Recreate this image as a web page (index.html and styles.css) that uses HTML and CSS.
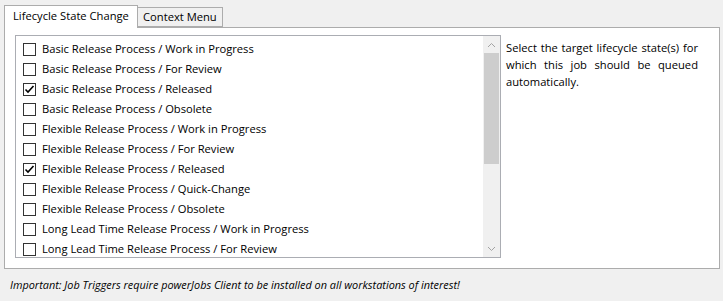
FILE: index.html
```html
<!DOCTYPE html>
<html>
<head>
<meta charset="utf-8">
<link rel="stylesheet" href="styles.css">
</head>
<body>
<div class="tabs">
  <div class="tab active">Lifecycle State Change</div>
  <div class="tab">Context Menu</div>
</div>
<div class="panel">
  <div class="listbox">
    <div class="items">
      <div class="row"><span class="cb"></span>Basic Release Process / Work in Progress</div>
      <div class="row"><span class="cb"></span>Basic Release Process / For Review</div>
      <div class="row"><span class="cb"><svg viewBox="0 0 13 13" width="13" height="13"><path d="M2.5 6.5 L5 9 L10.5 3" fill="none" stroke="#000" stroke-width="1.6"/></svg></span>Basic Release Process / Released</div>
      <div class="row"><span class="cb"></span>Basic Release Process / Obsolete</div>
      <div class="row"><span class="cb"></span>Flexible Release Process / Work in Progress</div>
      <div class="row"><span class="cb"></span>Flexible Release Process / For Review</div>
      <div class="row"><span class="cb"><svg viewBox="0 0 13 13" width="13" height="13"><path d="M2.5 6.5 L5 9 L10.5 3" fill="none" stroke="#000" stroke-width="1.6"/></svg></span>Flexible Release Process / Released</div>
      <div class="row"><span class="cb"></span>Flexible Release Process / Quick-Change</div>
      <div class="row"><span class="cb"></span>Flexible Release Process / Obsolete</div>
      <div class="row"><span class="cb"></span>Long Lead Time Release Process / Work in Progress</div>
      <div class="row"><span class="cb"></span>Long Lead Time Release Process / For Review</div>
    </div>
    <div class="scrollbar">
      <div class="arrow"><svg width="9" height="6" viewBox="0 0 9 6"><path d="M1 5 L4.5 1.5 L8 5" fill="none" stroke="#a3a3a3" stroke-width="1"/></svg></div>
      <div class="thumb"></div>
      <div class="track"></div>
      <div class="arrow"><svg width="9" height="6" viewBox="0 0 9 6"><path d="M1 1 L4.5 4.5 L8 1" fill="none" stroke="#a3a3a3" stroke-width="1"/></svg></div>
    </div>
  </div>
  <p class="desc">Select the target lifecycle state(s) for which this job should be queued automatically.</p>
</div>
<p class="note">Important: Job Triggers require powerJobs Client to be installed on all workstations of interest!</p>
</body>
</html>
```
FILE: styles.css
```css
html, body {
  margin: 0;
  padding: 0;
  background: #f0f0f0;
  width: 723px;
  height: 301px;
  overflow: hidden;
  font-family: "Open Sans", "Noto Sans", sans-serif;
  font-size: 11.2px;
  color: #000;
}
.tabs {
  display: flex;
  align-items: flex-end;
  padding: 5px 0 0 4px;
  height: 22px;
  position: relative;
  z-index: 1;
}
.tab {
  box-sizing: border-box;
  border: 1px solid #acacac;
  background: #f0f0f0;
  height: 20px;
  padding: 0 5px;
  line-height: 18px;
  margin-left: -1px;
}
.tab.active {
  width: 134px;
  height: 23px;
  background: #fff;
  border-bottom: none;
  margin-left: 0;
  margin-bottom: -1px;
  line-height: 20px;
  padding: 0 0 0 8px;
  z-index: 2;
  position: relative;
}
.panel {
  box-sizing: border-box;
  margin-left: 4px;
  width: 716px;
  height: 242px;
  border: 1px solid #acacac;
  background: #fff;
  display: flex;
  align-items: flex-start;
  padding: 7px 0 0 10px;
}
.listbox {
  box-sizing: border-box;
  width: 486px;
  height: 223px;
  border: 1px solid #abadb3;
  display: flex;
}
.items {
  flex: 1;
  padding: 2px 0 0 7px;
  overflow: hidden;
}
.row {
  height: 20px;
  display: flex;
  align-items: center;
  white-space: nowrap;
}
.cb {
  box-sizing: border-box;
  width: 13px;
  height: 13px;
  border: 1px solid #333;
  background: #fff;
  margin-right: 6px;
  display: flex;
  align-items: center;
  justify-content: center;
  position: relative;
  top: 1px;
}
.cb svg {
  display: block;
  flex: none;
}
.scrollbar {
  width: 17px;
  background: #f0f0f0;
  display: flex;
  flex-direction: column;
}
.arrow {
  height: 17px;
  display: flex;
  align-items: center;
  justify-content: center;
}
.thumb {
  height: 111px;
  margin: 0 1px;
  background: #cdcdcd;
}
.track {
  flex: 1;
}
.desc {
  margin: 4px 0 0 5px;
  width: 192px;
  text-align: justify;
  line-height: 17px;
}
.note {
  margin: 8px 0 0 10px;
  font-style: italic;
  font-size: 10.9px;
}
```
